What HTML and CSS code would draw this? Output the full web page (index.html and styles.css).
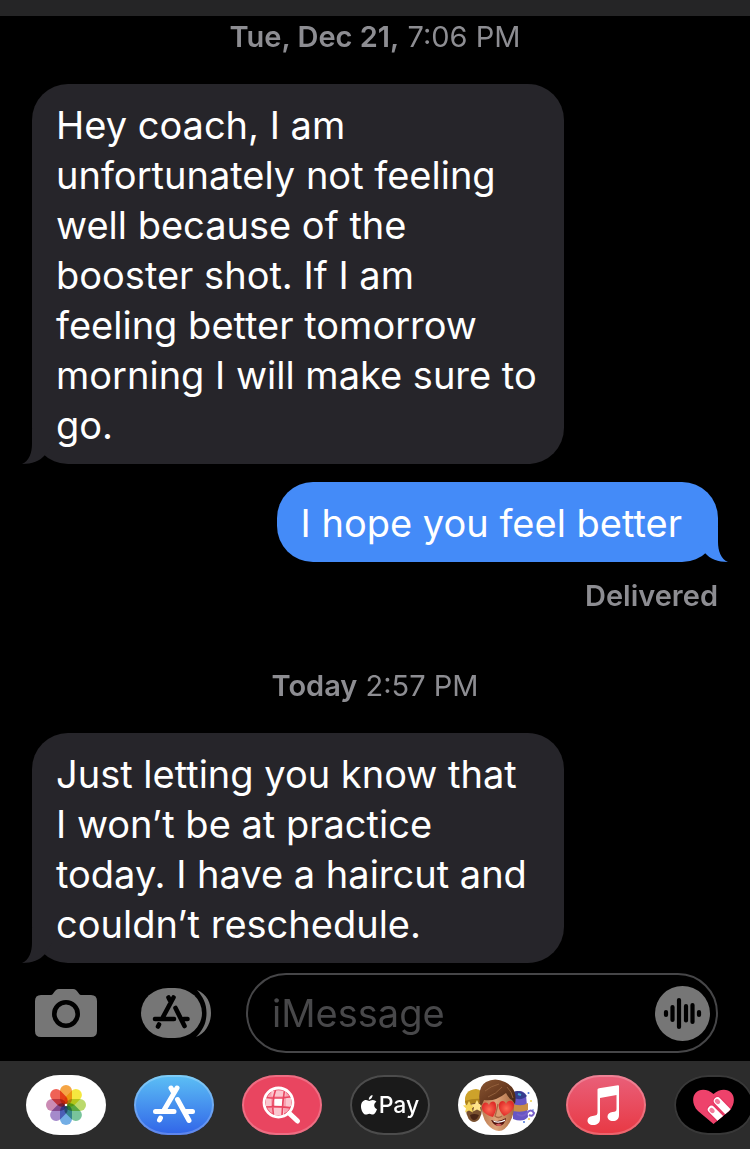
FILE: index.html
```
<!DOCTYPE html>
<html lang="en">
<head>
<meta charset="utf-8">
<meta name="viewport" content="width=device-width, initial-scale=1">
<title>Messages</title>
<link rel="stylesheet" href="styles.css">
</head>
<body>
<div class="screen">
  <header class="topbar"></header>
  <main class="thread">
    <p class="stamp"><b>Tue, Dec 21,</b> 7:06 PM</p>
    <div class="bubble received">Hey coach, I am<br>unfortunately not feeling<br>well because of the<br>booster shot. If I am<br>feeling better tomorrow<br>morning I will make sure to<br>go.
      <svg class="tail tail-left" viewBox="0 0 48 36" aria-hidden="true"><path d="M10 0V16C10 25 7 33 0 36C10 36 18 33 23 27L30 16Z"/></svg>
    </div>
    <div class="bubble sent">I hope you feel better
      <svg class="tail tail-right" viewBox="0 0 48 36" aria-hidden="true"><path d="M38 0V16C38 25 41 33 48 36C38 36 30 33 25 27L18 16Z"/></svg>
    </div>
    <p class="status">Delivered</p>
    <p class="stamp today"><b>Today</b> 2:57 PM</p>
    <div class="bubble received">Just letting you know that<br>I won’t be at practice<br>today. I have a haircut and<br>couldn’t reschedule.
      <svg class="tail tail-left" viewBox="0 0 48 36" aria-hidden="true"><path d="M10 0V16C10 25 7 33 0 36C10 36 18 33 23 27L30 16Z"/></svg>
    </div>
  </main>
  <form class="composer">
    <button class="tool camera" type="button" aria-label="Camera">
      <svg width="62" height="48" viewBox="0 0 62 48"><path fill="#767676" d="M6 6H16C19 6 19 0 24 0H38C43 0 43 6 46 6H56Q62 6 62 12V42Q62 48 56 48H6Q0 48 0 42V12Q0 6 6 6Z"/><circle cx="31" cy="25" r="11.7" fill="none" stroke="#000" stroke-width="4.6"/></svg>
    </button>
    <button class="tool" type="button" aria-label="Apps">
      <svg width="70" height="50" viewBox="0 0 70 50"><path fill="#767676" d="M56 2C66 6 70 15 70 25S65 45 55 49C62 42 65.500 35 65.500 25S62 9 56 2Z"/><rect width="61" height="50" rx="27" ry="25" fill="#767676"/><g fill="none" stroke="#000" stroke-width="4.6" stroke-linecap="round"><path d="M27.5 9.500l1.500 3M32.500 9.500L22 29M14 31H33M43 31H46.500M34.500 20L43.500 38M18 36.500l-1 2"/></g></svg>
    </button>
    <div class="field">
      <input class="entry" type="text" placeholder="iMessage" aria-label="iMessage">
      <button class="audio" type="button" aria-label="Record audio">
        <svg width="55" height="55" viewBox="0 0 55 55"><circle cx="27.500" cy="27.500" r="27.500" fill="#767676"/><path d="M11 26v3M17.500 21v13M24 14v27M31 20v14.500M37.500 19v17M44 26v3" fill="none" stroke="#000" stroke-width="4.200" stroke-linecap="round"/></svg>
      </button>
    </div>
  </form>
  <nav class="drawer" aria-label="Message apps">
    <button class="app white" type="button" aria-label="Photos">
      <svg viewBox="0 0 80 60"><g class="petals" transform="translate(40 30)">
        <rect x="-6" y="-20" width="12" height="20" rx="6" fill="#f5a545"/>
        <rect x="-6" y="-20" width="12" height="20" rx="6" fill="#f5e83f" transform="rotate(45)"/>
        <rect x="-6" y="-20" width="12" height="20" rx="6" fill="#bbd96c" transform="rotate(90)"/>
        <rect x="-6" y="-20" width="12" height="20" rx="6" fill="#78c49b" transform="rotate(135)"/>
        <rect x="-6" y="-20" width="12" height="20" rx="6" fill="#73aee5" transform="rotate(180)"/>
        <rect x="-6" y="-20" width="12" height="20" rx="6" fill="#a58acb" transform="rotate(225)"/>
        <rect x="-6" y="-20" width="12" height="20" rx="6" fill="#cb8bb4" transform="rotate(270)"/>
        <rect x="-6" y="-20" width="12" height="20" rx="6" fill="#ef6256" transform="rotate(315)"/>
      </g><circle cx="40" cy="30" r="1.300" fill="#fff"/></svg>
    </button>
    <button class="app store" type="button" aria-label="App Store">
      <svg viewBox="0 0 80 60"><path d="M37 13l2 3.500M43 13L29.500 36M21.500 36.500H40M51 36.500H58.500M43.500 24.500L55 45.500M26.500 43l-1 2" fill="none" stroke="#fff" stroke-width="5" stroke-linecap="round"/></svg>
    </button>
    <button class="app search" type="button" aria-label="Image search">
      <svg viewBox="0 0 80 60"><circle cx="36.500" cy="27.500" r="12.500" fill="#f7a3b2"/><path d="M29.500 16h14v5h-14ZM24 23h5v8h-5ZM44 23h5v8h-5ZM31 33h11v7H31Z" fill="#fbc5ce"/><path d="M32.500 23h8v8h-8Z" fill="#fff"/><path d="M33.500 15Q29.500 27 31.500 40M42.500 15Q40.500 27 40 40M24 22.500Q37 24 50 21.500M24 32Q37 31 49 33" fill="none" stroke="#e94560" stroke-width="1.600"/><path d="M47.500 38.500L55.500 46" stroke="#fff" stroke-width="5" stroke-linecap="round"/><circle cx="36.500" cy="27.500" r="14.500" fill="none" stroke="#fff" stroke-width="2.800"/></svg>
    </button>
    <button class="app pay" type="button" aria-label="Apple Pay">
      <svg class="apple" width="16" height="20" viewBox="0 0 16 20"><path fill="#fff" d="M11.500 0C11.700 2.500 9.800 4.800 7.800 4.700C7.600 2.500 9.400.3 11.500 0ZM8.200 5.900C9 5.900 10 4.900 11.900 4.900C13.300 4.900 14.600 5.600 15.400 6.800C12.200 8.800 12.700 12.800 16 14.200C15 17 13.500 19.600 11.700 19.600C10.400 19.600 10 18.800 8.400 18.800S6.300 19.600 5 19.600C2.300 19.600 0 15 0 11.400C0 7.300 2.400 5 5 5C6.500 5 7.400 5.900 8.200 5.900Z"/></svg><span>Pay</span>
    </button>
    <button class="app white" type="button" aria-label="Memoji stickers">
      <svg viewBox="0 0 80 60">
        <defs><linearGradient id="skin" x1="0" x2="1"><stop offset="0" stop-color="#b9794f"/><stop offset=".45" stop-color="#dfa47a"/><stop offset="1" stop-color="#a8693f"/></linearGradient><linearGradient id="hair" x1="0" y1="0" x2="1" y2="1"><stop offset="0" stop-color="#8a5632"/><stop offset=".5" stop-color="#6a3b20"/><stop offset="1" stop-color="#3f2212"/></linearGradient><radialGradient id="heart"><stop offset="0" stop-color="#ff6a54"/><stop offset="1" stop-color="#df2d29"/></radialGradient></defs>
        <ellipse cx="16" cy="34" rx="8" ry="13" fill="#79502f"/>
        <path d="M7 27Q6 15 18 14Q25 14 26 26L8 29Z" fill="#cda22b"/><path d="M7 26Q15 23 25 24V28Q15 27 8 31Z" fill="#ad821d"/>
        <path d="M11 26l2 4 4 .5-3 3 1 4-4-2-4 2 1-4-3-3 4-.5Z" fill="#f5d55c"/><path d="M19 25l2 4 4 .5-3 3 1 4-4-2-4 2 1-4-3-3 4-.5Z" fill="#ffe48a"/><path d="M12 40Q16 38 21 40Q19 45 16 45T12 40Z" fill="#492516"/>
        <path d="M55 18Q64 13 68 20L70 42Q65 48 55 44Z" fill="#6756c4"/><path d="M55 17Q63 14 69 21Q64 26 55 23Z" fill="#343c8e"/><path d="M55 29Q64 32 70 28V35Q63 38 55 36Z" fill="#c98e45"/><path d="M59 39Q65 43 69 38T76 38Q75 42 71 40" stroke="#7960ca" stroke-width="2" fill="none"/><path d="M60 19l3 1" stroke="#43a5cf" stroke-width="2"/>
        <g fill="#4874d8"><circle cx="70.500" cy="18" r="1"/><circle cx="66" cy="47" r="1"/><circle cx="75" cy="35" r=".8"/></g><g fill="#edce4e"><circle cx="73" cy="26" r="1"/><circle cx="71" cy="44" r="1"/></g>
        <path d="M23 25C23 14 55 13 56 26Q57 38 52 47Q47 56 41 56T29 49Q23 41 23 25Z" fill="url(#skin)"/>
        <path d="M22 29Q19 12 28 7Q37 2 47 7Q60 13 57 29L54 25Q51 24 48 18Q37 27 26 25Q25 28 23 31Z" fill="url(#hair)"/><path d="M27 16Q33 11 41 9M30 22Q38 19 44 12M49 12Q54 17 55 23" fill="none" stroke="#93603c" stroke-width="1"/>
        <path d="M40 29Q38 38 37 41Q40 44 44 41" stroke="#a96946" stroke-width="1.300" fill="#dc9d72"/>
        <path d="M33 45Q40 48 48 43Q47 50 41 51Q36 51 33 45Z" fill="#54150f"/><path d="M35 45.500Q41 48 47 44.500V46Q41 49 36 47Z" fill="#fff"/><path d="M37 50Q41 47 44 50Q41 52 37 50Z" fill="#d65a59"/>
        <path d="M35 42C28 40 23 36 24 31C25 27 29 26 31 30C33 25 38 26 38 30C39 34 37 38 35 42Z" fill="url(#heart)"/><path d="M46 41C42 37 40 33 41 29C42 25 47 25 48 29C50 24 56 25 56 30C56 35 51 39 46 41Z" fill="url(#heart)"/>
      </svg>
    </button>
    <button class="app music" type="button" aria-label="Music">
      <svg viewBox="0 0 80 60"><path fill="#fff" d="M31.500 14.500Q31.500 13.500 33 13.200L52 10.300Q53 10.200 53 11.300V40C53 44 50.500 46 47 46C43.500 46 41.500 44 41.500 41.500C41.500 39 43.500 37.400 46.500 37C49.500 36.600 50.500 36.300 50.500 34V20L34 23V44C34 48 31 50 27 50C23.500 50 21.500 48 21.500 45.500C21.500 43 23.500 41.400 26.500 41C30.500 40.500 31.500 40 31.500 37Z"/></svg>
    </button>
    <button class="app touch" type="button" aria-label="Digital Touch">
      <svg viewBox="0 0 80 60"><defs><clipPath id="heart-clip"><path d="M39.500 49L24 36C18 30 18 22 21.500 18C26 13 34 14 39.500 19C45 14 53 13 57.500 18C61 22 61 30 55 36Z"/></clipPath></defs><g clip-path="url(#heart-clip)"><path fill="#ee426b" d="M18 12H62V52H18Z"/><path d="M43.500 26L58 41M37.500 34.500L52 49" stroke="#e53360" stroke-width="9.600" stroke-linecap="round"/><path d="M43.500 26L58 41M37.500 34.500L52 49" stroke="#fff" stroke-width="7.400" stroke-linecap="round"/><path d="M43 26l1 1M37.500 35l1 1" stroke="#f27c9b" stroke-width="4.400" stroke-linecap="round"/></g></svg>
    </button>
  </nav>
</div>
</body>
</html>
```
FILE: styles.css
```
* { box-sizing: border-box; }

body {
  margin: 0;
  background: #000;
  color: #fff;
  font-family: Inter, "Liberation Sans", sans-serif;
}

button {
  padding: 0;
  border: 0;
  background: none;
  color: inherit;
  font: inherit;
}

svg { display: block; }

.screen {
  display: flex;
  flex-direction: column;
  min-height: 100vh;
  overflow: hidden;
}

.topbar { height: 16px; background: #252526; }

.thread {
  display: flex;
  flex-direction: column;
  flex: 1;
  padding: 3px 32px 10px;
}

.stamp, .status {
  margin: 0;
  color: #8d8d92;
  font-size: 29px;
  line-height: 36px;
}

.stamp { text-align: center; margin-bottom: 29px; }
.stamp b { font-weight: 600; }
.today { margin-top: 54px; }
.status { margin-top: 16px; text-align: right; font-weight: 600; }

.bubble {
  position: relative;
  padding: 16px 24px 14px;
  border-radius: 36px;
  font-size: 38px;
  line-height: 50px;
  white-space: nowrap;
}

.received { align-self: flex-start; min-width: 77.5%; background: #26252a; }
.sent { align-self: flex-end; margin-top: 18px; padding-right: 36px; background: #448bf8; }

.tail { position: absolute; bottom: 0; width: 48px; height: 36px; }
.tail-left { left: -10px; fill: #26252a; }
.tail-right { right: -10px; fill: #448bf8; }

.composer {
  display: flex;
  align-items: center;
  padding: 0 32px 8px 35px;
}

.tool { flex: none; }
.camera { margin-right: 44px; }

.field {
  display: flex;
  align-items: center;
  flex: 1;
  min-width: 0;
  height: 80px;
  margin-left: 35px;
  padding: 0 6px 0 24px;
  border: 2px solid #464648;
  border-radius: 40px;
}

.entry {
  flex: 1;
  min-width: 0;
  padding: 0;
  border: 0;
  outline: 0;
  background: transparent;
  color: #fff;
  font: inherit;
  font-size: 38px;
}

.entry::placeholder { color: #48484a; opacity: 1; }

.drawer {
  display: flex;
  gap: 28px;
  padding: 14px 0 14px 26px;
  background: #2c2c2c;
}

.app {
  flex: none;
  width: 80px;
  height: 60px;
  border-radius: 34px / 30px;
  box-shadow: inset 0 0 0 2px #ffffff38;
  overflow: hidden;
}

.app > svg { width: 80px; height: 60px; }
.white { background: #fff; }
.petals rect { mix-blend-mode: multiply; }
.store { background: linear-gradient(#5cc0f5, #3164e8); }
.search { background: #e94560; }
.music { background: linear-gradient(#e9607a, #e83843); }
.touch { background: #000; }

.pay {
  display: flex;
  align-items: center;
  justify-content: center;
  gap: 2px;
  background: #1a1a1a;
  font-size: 23px;
  font-weight: 500;
}

.pay > .apple { width: 16px; height: 20px; }
```
